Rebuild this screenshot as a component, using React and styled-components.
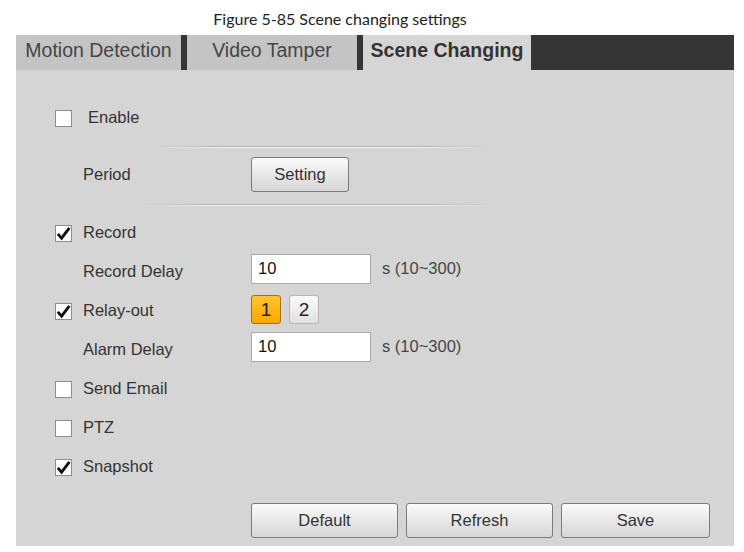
import React, { useState } from 'react';
import styled, { createGlobalStyle } from 'styled-components';

const GlobalStyle = createGlobalStyle`
  body {
    margin: 0;
    background: #ffffff;
    font-family: "Liberation Sans", Arial, sans-serif;
  }
`;

const Page = styled.div`
  width: 744px;
  height: 552px;
  background: #ffffff;
`;

const Caption = styled.div`
  height: 35px;
  padding-right: 64px;
  display: flex;
  align-items: center;
  justify-content: center;
  padding-top: 2px;
  box-sizing: border-box;
  font-family: Lato, "Open Sans", sans-serif;
  font-size: 16px;
  color: #222;
`;

const Panel = styled.div`
  margin-left: 16px;
  width: 718px;
  background: #d5d5d5;
`;

const TabBar = styled.div`
  height: 35px;
  display: flex;
  background: #353535;
`;

const Tab = styled.div`
  width: ${(p) => p.width}px;
  margin-right: ${(p) => p.gap || 0}px;
  display: flex;
  align-items: center;
  justify-content: center;
  padding-bottom: 5px;
  box-sizing: border-box;
  background: ${(p) => (p.active ? '#d5d5d5' : '#c4c4c4')};
  color: ${(p) => (p.active ? '#333' : '#444')};
  font-size: 19.5px;
  font-weight: ${(p) => (p.active ? 700 : 400)};
`;

const Body = styled.div`
  padding: 28px 0 8px 39px;
`;

const Row = styled.div`
  height: ${(p) => p.h || 39}px;
  display: flex;
  align-items: center;
  font-size: 16.5px;
  color: #333;
`;

const LabelCell = styled.div`
  width: 196px;
  display: flex;
  align-items: center;
  padding-left: ${(p) => (p.indent ? 28 : 0)}px;
  box-sizing: border-box;
`;

const Check = styled.span`
  width: 17px;
  height: 17px;
  box-sizing: border-box;
  border: 1px solid #8d8d8d;
  background: #fff;
  display: inline-flex;
  align-items: center;
  justify-content: center;
  margin-right: ${(p) => p.gap}px;
  margin-top: 1px;
`;

const Divider = styled.div`
  height: ${(p) => p.h}px;
  display: flex;
  align-items: flex-start;
  padding-top: ${(p) => p.top || 0}px;
  box-sizing: border-box;
`;

const Groove = styled.div`
  margin-left: ${(p) => p.left}px;
  width: ${(p) => p.width}px;
  height: 2px;
  background:
    linear-gradient(to right, rgba(170,170,170,0), #b4b4b4 20%, #b4b4b4 80%, rgba(170,170,170,0)) top / 100% 1px no-repeat,
    linear-gradient(to right, rgba(255,255,255,0), #f2f2f2 20%, #f2f2f2 80%, rgba(255,255,255,0)) bottom / 100% 1px no-repeat;
`;

const Button = styled.button`
  width: ${(p) => p.w}px;
  height: 35px;
  border: 1px solid #7a7a7a;
  border-radius: 3px;
  background: linear-gradient(#fbfbfb, #e6e6e6 55%, #d6d6d6);
  font-family: "Liberation Sans", Arial, sans-serif;
  font-size: 16.5px;
  color: #333;
  padding: 0;
`;

const Input = styled.input`
  width: 120px;
  height: 30px;
  margin-top: -6px;
  box-sizing: border-box;
  border: 1px solid #a9a9a9;
  background: #fff;
  padding: 0 0 0 6px;
  font-family: "Liberation Sans", Arial, sans-serif;
  font-size: 16.5px;
  color: #111;
  outline: none;
`;

const Unit = styled.span`
  margin-left: 11px;
  margin-top: -6px;
  color: #444;
`;

const RelayGroup = styled.div`
  display: flex;
  gap: 8px;
  margin-top: -2px;
`;

const RelayBtn = styled.div`
  width: 30px;
  height: 29px;
  box-sizing: border-box;
  border-radius: 3px;
  border: 1px solid ${(p) => (p.on ? '#a27400' : '#b4b4b4')};
  background: ${(p) =>
    p.on ? 'linear-gradient(#ffc531, #f9a800)' : 'linear-gradient(#fafafa, #e1e1e1)'};
  display: flex;
  align-items: center;
  justify-content: center;
  font-size: 19px;
  color: #222;
`;

const Footer = styled.div`
  margin-top: 17px;
  padding-left: 196px;
  display: flex;
  gap: 8px;
`;

function CheckBox({ checked, gap = 11 }) {
  return (
    <Check gap={gap}>
      {checked && (
        <svg width="15" height="15" viewBox="0 0 15 15">
          <path d="M1.8 7.8 L5.6 12.2 L13.4 1.8" fill="none" stroke="#111" strokeWidth="2.8" />
        </svg>
      )}
    </Check>
  );
}

export default function App() {
  const [record] = useState('10');
  const [alarm] = useState('10');

  return (
    <Page>
      <GlobalStyle />
      <Caption>Figure 5-85 Scene changing settings</Caption>
      <Panel>
        <TabBar>
          <Tab width={165} gap={6}>Motion Detection</Tab>
          <Tab width={170} gap={6}>Video Tamper</Tab>
          <Tab width={168} active>Scene Changing</Tab>
        </TabBar>
        <Body>
          <Row>
            <LabelCell>
              <CheckBox gap={16} />
              Enable
            </LabelCell>
          </Row>
          <Divider h={18} top={9}>
            <Groove left={95} width={340} />
          </Divider>
          <Row>
            <LabelCell indent>Period</LabelCell>
            <Button w={98}>Setting</Button>
          </Row>
          <Divider h={19} top={10}>
            <Groove left={80} width={360} />
          </Divider>
          <Row>
            <LabelCell>
              <CheckBox checked />
              Record
            </LabelCell>
          </Row>
          <Row>
            <LabelCell indent>Record Delay</LabelCell>
            <Input defaultValue={record} />
            <Unit>s (10~300)</Unit>
          </Row>
          <Row>
            <LabelCell>
              <CheckBox checked />
              Relay-out
            </LabelCell>
            <RelayGroup>
              <RelayBtn on>1</RelayBtn>
              <RelayBtn>2</RelayBtn>
            </RelayGroup>
          </Row>
          <Row>
            <LabelCell indent>Alarm Delay</LabelCell>
            <Input defaultValue={alarm} />
            <Unit>s (10~300)</Unit>
          </Row>
          <Row>
            <LabelCell>
              <CheckBox />
              Send Email
            </LabelCell>
          </Row>
          <Row>
            <LabelCell>
              <CheckBox />
              PTZ
            </LabelCell>
          </Row>
          <Row>
            <LabelCell>
              <CheckBox checked />
              Snapshot
            </LabelCell>
          </Row>
          <Footer>
            <Button w={147}>Default</Button>
            <Button w={147}>Refresh</Button>
            <Button w={149}>Save</Button>
          </Footer>
        </Body>
      </Panel>
    </Page>
  );
}
